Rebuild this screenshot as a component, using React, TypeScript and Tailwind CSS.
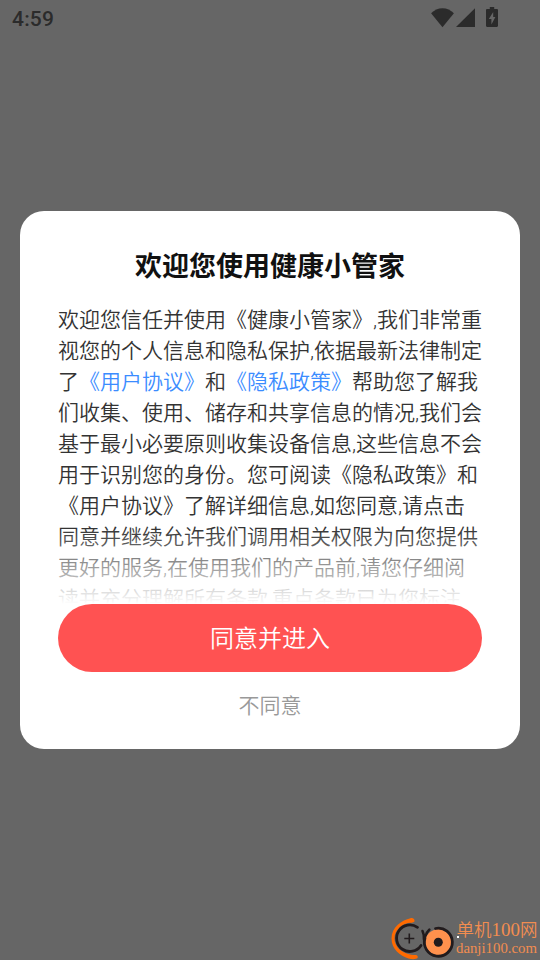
const agreementLines = [
  "欢迎您信任并使用《健康小管家》,我们非常重",
  "视您的个人信息和隐私保护,依据最新法律制定",
  "了《用户协议》和《隐私政策》帮助您了解我",
  "们收集、使用、储存和共享信息的情况,我们会",
  "基于最小必要原则收集设备信息,这些信息不会",
  "用于识别您的身份。您可阅读《隐私政策》和",
  "《用户协议》了解详细信息,如您同意,请点击",
  "同意并继续允许我们调用相关权限为向您提供",
  "更好的服务,在使用我们的产品前,请您仔细阅",
  "读并充分理解所有条款,重点条款已为您标注",
];

// Only the first mention of each document is a link
const LINK_LINE = 2;

function AgreementLine({ text, linked }: { text: string; linked: boolean }) {
  if (!linked) return <p>{text}</p>;

  return (
    <p>
      {text.split(/(《[^》]+》)/).map((part, i) =>
        part.startsWith("《") ? (
          <a key={i} href="#" className="text-[#3b8cff]">
            {part}
          </a>
        ) : (
          <span key={i}>{part}</span>
        )
      )}
    </p>
  );
}

function StatusBar() {
  return (
    <header className="flex h-9 items-center justify-between pl-3 pr-[42px] text-[#2b2b2b]">
      <span className="pt-[2px] font-[Roboto] text-[21px] leading-9 font-medium tracking-[0.2px]">4:59</span>
      <div className="flex items-center">
        <svg width="23" height="20" viewBox="0 0 23 20" fill="currentColor">
          <path d="M11.5 19.2 0.1 5.3C3.2 2.1 7.2 0.200 11.5 0.200s8.300 1.900 11.400 5.100z" />
        </svg>
        <svg className="ml-[2px]" width="20" height="20" viewBox="0 0 20 20" fill="currentColor">
          <path d="M0 19 19 0.200v18.800z" />
        </svg>
        <svg className="ml-[10px]" width="12" height="22" viewBox="0 0 12 22">
          <path
            d="M3.800 0h4.400v2h2.600c.700 0 1.200.500 1.200 1.200v15.600c0 .700-.500 1.200-1.200 1.200H1.200C.500 20 0 19.500 0 18.800V3.200C0 2.500.500 2 1.200 2h2.600z"
            fill="currentColor"
          />
          <path d="M7.200 5 2.800 12h2.600v5.500L9.400 10H7.200z" fill="#666" />
        </svg>
      </div>
    </header>
  );
}

function Watermark() {
  return (
    <div className="absolute right-0 bottom-0 flex h-[44px] w-[150px]">
      <svg className="shrink-0" width="66" height="44" viewBox="0 0 66 44" fill="none">
        <path
          d="M20.500 2.200C12 4 1.500 11 1.500 22.500 1.500 33 10 40 18.500 42.500c4 1 7.500.800 9-.500.800-1.500 0-3-2-3C14 39 4.500 32 4.500 22.500 4.500 14 11.500 8.500 18 7c3-.300 5 0 6.500-1.500.500-2.500-1.500-3.800-4-3.300z"
          fill="#ff6a00"
        />
        <path
          d="M27.500 11.300A13.300 13.300 0 1 0 31 29.500"
          stroke="#211b1d"
          strokeWidth="2.800"
          strokeLinecap="round"
        />
        <path d="M19.300 17.500v10M14.300 22.500h10" stroke="#211b1d" strokeWidth="1.600" />
        <path
          d="M32.500 15c1.200 2.300 1.700 4.500 1.500 8.500M35.500 20.500c.500-3 1.700-5 3.800-6.800"
          stroke="#211b1d"
          strokeWidth="2.600"
          strokeLinecap="round"
        />
        <circle cx="48.300" cy="26.200" r="13" fill="#ff914d" />
        <path
          d="M45.500 12.500a14 14 0 1 1-10.500 9.500"
          stroke="#211b1d"
          strokeWidth="2.800"
          strokeLinecap="round"
        />
        <circle cx="48.300" cy="26.200" r="4.500" fill="#211b1d" />
      </svg>
      <div className="whitespace-nowrap text-[#f28d50]">
        <div className="mt-[3px] pl-[0.5px] font-['Liberation_Serif','Noto_Sans_CJK_SC',serif] text-[17.5px] leading-[22px] [font-weight:350]">
          单机<span className="text-[19px]">100</span>网
        </div>
        <div className="-mt-px font-['Liberation_Serif',serif] text-[14.8px] leading-[16px]">danji100.com</div>
      </div>
      <span className="absolute top-[20px] left-[67px] size-[1.5px] bg-white" />
    </div>
  );
}

export default function App() {
  return (
    <div
      lang="zh-CN"
      className="relative flex h-[960px] w-[540px] flex-col overflow-hidden bg-[#666] font-[Roboto,'Noto_Sans_CJK_SC',sans-serif] [text-spacing-trim:space-all]"
    >
      <StatusBar />

      <main className="mx-5 mt-[175px] flex h-[538px] flex-col rounded-[24px] bg-white px-[38px]">
        <h1 className="mt-[36px] text-center text-[27px] leading-[40px] font-bold text-[#111]">
          欢迎您使用健康小管家
        </h1>

        <div className="relative mt-[18px] h-[299px] overflow-hidden text-[21px] leading-[31px] [font-weight:350] whitespace-nowrap text-[#333]">
          {agreementLines.map((line, i) => (
            <AgreementLine key={i} text={line} linked={i === LINK_LINE} />
          ))}
          <div className="absolute inset-x-0 bottom-0 h-[76px] bg-linear-to-b from-white/0 to-white" />
        </div>

        <button className="h-[68px] shrink-0 rounded-full bg-[#ff5252] pt-[2px] text-[24px] [font-weight:350] text-white">
          同意并进入
        </button>
        <button className="mt-[19px] text-[21px] leading-[31px] [font-weight:350] text-[#999]">不同意</button>
      </main>

      <Watermark />
    </div>
  );
}
